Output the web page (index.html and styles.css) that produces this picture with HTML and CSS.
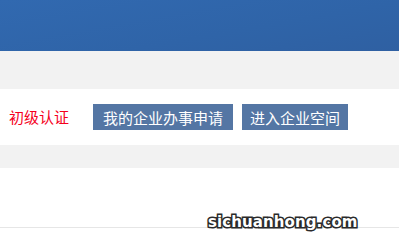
FILE: index.html
```html
<!DOCTYPE html>
<html lang="zh-CN">
<head>
<meta charset="utf-8">
<title>企业认证</title>
<link rel="stylesheet" href="styles.css">
</head>
<body>
<div class="page">
  <header class="header"></header>
  <div class="band band-top"></div>
  <div class="row">
    <span class="level">初级认证</span>
    <div class="actions">
      <a class="btn btn-wide">我的企业办事申请</a>
      <a class="btn btn-narrow">进入企业空间</a>
    </div>
  </div>
  <div class="band band-mid"></div>
  <div class="content"></div>
  <div class="watermark">sichuanhong.com</div>
</div>
</body>
</html>
```
FILE: styles.css
```css
html, body {
  margin: 0;
  padding: 0;
  background: #ffffff;
}
.page {
  position: relative;
  width: 399px;
  height: 243px;
  overflow: hidden;
  font-family: "Noto Sans CJK SC", "Liberation Sans", sans-serif;
}
.header {
  height: 51px;
  background: linear-gradient(170deg, #3169b0 0%, #2f64a8 60%, #2f60a2 100%);
}
.band {
  background: #f2f2f2;
}
.band-top {
  height: 38px;
}
.band-mid {
  height: 23px;
}
.row {
  height: 56px;
  display: flex;
  align-items: center;
  padding-left: 9px;
  box-sizing: border-box;
}
.level {
  color: #f5001c;
  font-size: 15px;
  line-height: 26px;
  width: 60px;
}
.actions {
  display: flex;
  gap: 9px;
  margin-left: 24px;
}
.btn {
  display: flex;
  align-items: center;
  justify-content: center;
  height: 26px;
  background: #5476a4;
  color: #ffffff;
  font-size: 15px;
  text-decoration: none;
}
.btn-wide {
  width: 140px;
}
.btn-narrow {
  width: 106px;
}
.content {
  height: 59px;
  border-bottom: 1px solid #e6e6e6;
}
.watermark {
  position: absolute;
  left: 208px;
  top: 213px;
  font-family: "DejaVu Sans", sans-serif;
  font-weight: bold;
  font-size: 15px;
  color: #ffffff;
  -webkit-text-stroke: 3px #2a2a2a;
  paint-order: stroke fill;
  letter-spacing: 0.1px;
}
```
